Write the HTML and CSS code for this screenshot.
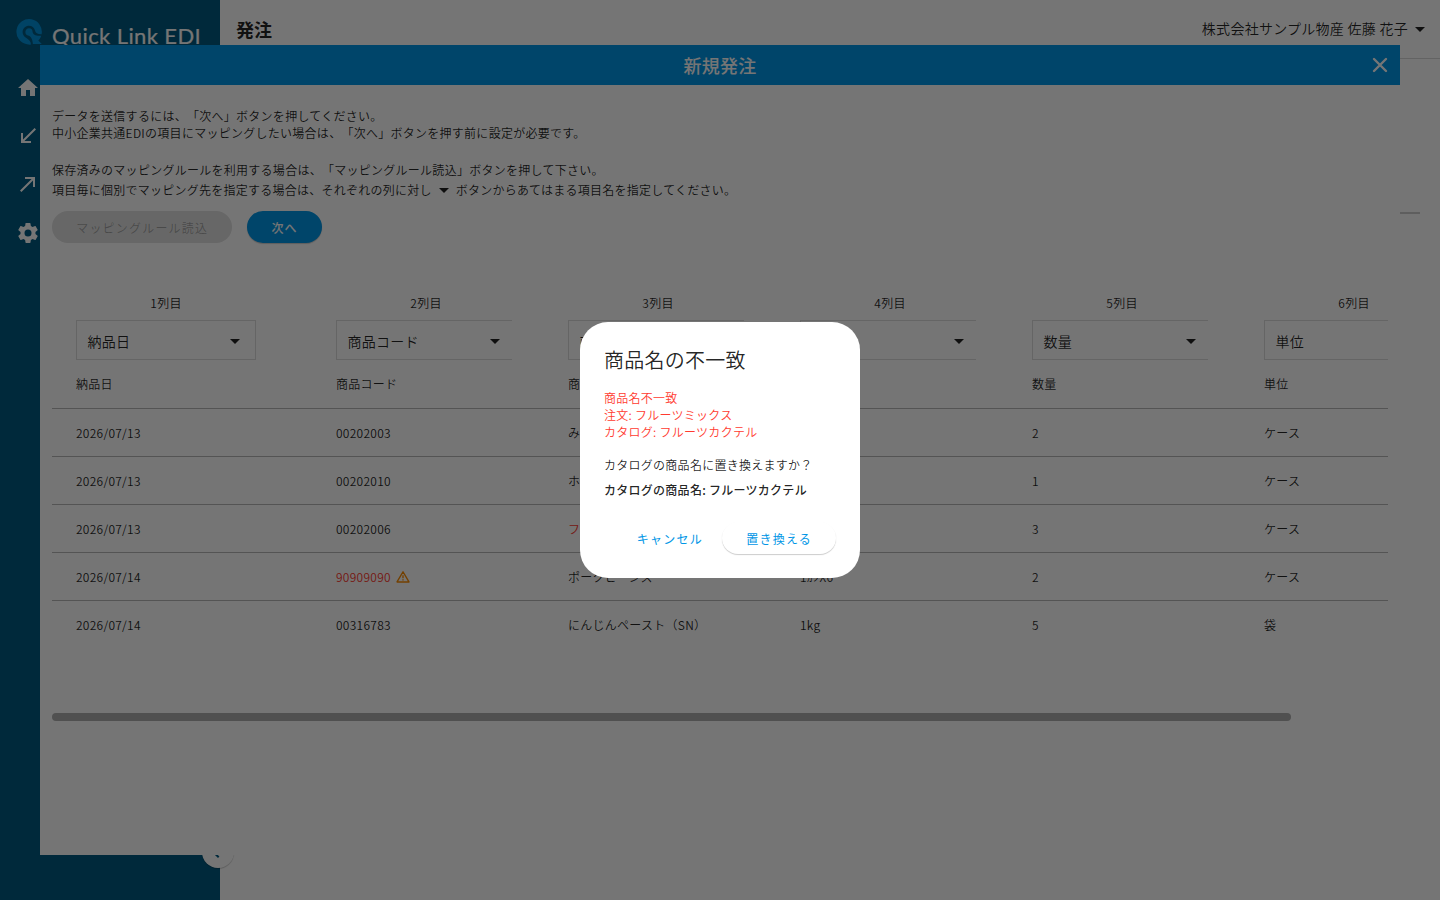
FILE: index.html
```html
<!DOCTYPE html>
<html lang="ja">
<head>
  <meta charset="UTF-8">
  <meta name="viewport" content="width=device-width, initial-scale=1.0">
  <title>Quick Link EDI</title>
  <link rel="stylesheet" href="styles.css">
</head>
<body>
  <div class="app">
    <!-- Sidebar -->
    <aside class="sidebar">
      <div class="brand">
        <svg class="brand-mark" viewBox="0 0 26 26">
          <path d="M15 25.6C14.8 22 12.8 20.2 9.6 18.4A6.3 6.3 0 1 1 19 11.5C19.6 14.2 21.5 15.3 25.6 15.2A12.7 12.7 0 1 0 11 25.3Q13 25.8 15 25.6Z"/>
          <path d="M13 9.2A3.8 3.8 0 0 1 16.6 13C17 15.6 19.5 17.2 25.2 16.8C24.6 19 23.6 20.5 22.3 21.5L25.8 25H16.9C16.6 20 14.6 17.2 12 16.6A3.8 3.8 0 0 1 13 9.2Z"/>
        </svg>
        <span class="brand-name">Quick Link EDI</span>
      </div>
      <nav class="nav">
        <svg class="nav-icon" viewBox="0 0 24 24"><path d="M10 20v-6h4v6h5v-8h3L12 3 2 12h3v8z"/></svg>
        <svg class="nav-icon" viewBox="0 0 24 24"><path d="M20 5.41L18.59 4 7 15.59V9H5v10h10v-2H8.41z"/></svg>
        <svg class="nav-icon" viewBox="0 0 24 24"><path d="M9 5v2h6.59L4 18.59 5.41 20 17 8.41V15h2V5z"/></svg>
        <svg class="nav-icon" viewBox="0 0 24 24"><path d="M12 15.5A3.5 3.5 0 0 1 8.5 12 3.5 3.5 0 0 1 12 8.5a3.5 3.5 0 0 1 3.5 3.5 3.5 3.5 0 0 1-3.5 3.5m7.43-2.53c.04-.32.07-.64.07-.97s-.03-.66-.07-1l2.11-1.63c.19-.15.24-.42.12-.64l-2-3.46c-.12-.22-.39-.31-.61-.22l-2.49 1c-.52-.39-1.06-.73-1.69-.98l-.37-2.65A.506.506 0 0 0 14 2h-4c-.25 0-.46.18-.5.42l-.37 2.65c-.63.25-1.17.59-1.69.98l-2.49-1c-.22-.09-.49 0-.61.22l-2 3.46c-.13.22-.07.49.12.64L4.57 11c-.04.34-.07.67-.07 1s.03.65.07.97l-2.11 1.66c-.19.15-.25.42-.12.64l2 3.46c.12.22.39.3.61.22l2.49-1.01c.52.4 1.06.74 1.69.99l.37 2.65c.04.24.25.42.5.42h4c.25 0 .46-.18.5-.42l.37-2.65c.63-.26 1.17-.59 1.69-.99l2.49 1.01c.22.08.49 0 .61-.22l2-3.46c.12-.22.07-.49-.12-.64z"/></svg>
      </nav>
      <button class="collapse">
        <svg viewBox="0 0 24 24"><path d="M15.41 16.58L10.83 12l4.58-4.59L14 6l-6 6 6 6z"/></svg>
      </button>
    </aside>

    <main class="main">
      <header class="topbar">
        <h1 class="page-title">発注</h1>
        <div class="user">株式会社サンプル物産 佐藤 花子
          <svg class="caret" viewBox="0 0 24 24"><path d="M7 10l5 5 5-5z"/></svg>
        </div>
      </header>
      <hr class="section-line">
    </main>
  </div>

  <!-- Order window -->
  <div class="order">
    <div class="order-head">
      <h2 class="order-title">新規発注</h2>
      <svg class="order-close" viewBox="0 0 24 24"><path d="M6 6L18 18M18 6L6 18"/></svg>
    </div>
    <div class="order-body">
      <p class="guide">データを送信するには、「次へ」ボタンを押してください。<br>中小企業共通EDIの項目にマッピングしたい場合は、「次へ」ボタンを押す前に設定が必要です。</p>
      <p class="guide">保存済みのマッピングルールを利用する場合は、「マッピングルール読込」ボタンを押して下さい。</p>
      <p class="guide guide-select">項目毎に個別でマッピング先を指定する場合は、それぞれの列に対し<svg class="caret" viewBox="0 0 24 24"><path d="M7 10l5 5 5-5z"/></svg>ボタンからあてはまる項目名を指定してください。</p>
      <div class="actions">
        <button class="btn btn-disabled" disabled>マッピングルール読込</button>
        <button class="btn btn-primary">次へ</button>
      </div>

      <div class="table-wrap">
        <table class="table">
          <thead>
            <tr class="mapping">
              <th><div class="col-no">1列目</div><div class="select-clip"><div class="select">納品日<svg class="caret" viewBox="0 0 24 24"><path d="M7 10l5 5 5-5z"/></svg></div></div></th>
              <th><div class="col-no">2列目</div><div class="select-clip"><div class="select">商品コード<svg class="caret" viewBox="0 0 24 24"><path d="M7 10l5 5 5-5z"/></svg></div></div></th>
              <th><div class="col-no">3列目</div><div class="select-clip"><div class="select">商品名<svg class="caret" viewBox="0 0 24 24"><path d="M7 10l5 5 5-5z"/></svg></div></div></th>
              <th><div class="col-no">4列目</div><div class="select-clip"><div class="select select-empty"><svg class="caret" viewBox="0 0 24 24"><path d="M7 10l5 5 5-5z"/></svg></div></div></th>
              <th><div class="col-no">5列目</div><div class="select-clip"><div class="select">数量<svg class="caret" viewBox="0 0 24 24"><path d="M7 10l5 5 5-5z"/></svg></div></div></th>
              <th><div class="col-no">6列目</div><div class="select-clip"><div class="select">単位<svg class="caret" viewBox="0 0 24 24"><path d="M7 10l5 5 5-5z"/></svg></div></div></th>
            </tr>
          </thead>
          <tbody>
            <tr><td>納品日</td><td>商品コード</td><td>商品名</td><td></td><td>数量</td><td>単位</td></tr>
            <tr><td>2026/07/13</td><td>00202003</td><td>みかん</td><td></td><td>2</td><td>ケース</td></tr>
            <tr><td>2026/07/13</td><td>00202010</td><td>ホール</td><td></td><td>1</td><td>ケース</td></tr>
            <tr><td>2026/07/13</td><td>00202006</td><td class="error">フルーツミックス</td><td></td><td>3</td><td>ケース</td></tr>
            <tr><td>2026/07/14</td><td class="error">90909090<svg class="warn" viewBox="0 0 24 24"><path d="M12 3L1.8 20.5H22.2ZM12 9v5M12 16v2.2"/></svg></td><td>ポークビーンズ</td><td>1ｶﾝX6</td><td>2</td><td>ケース</td></tr>
            <tr><td>2026/07/14</td><td>00316783</td><td>にんじんペースト（SN）</td><td>1kg</td><td>5</td><td>袋</td></tr>
          </tbody>
        </table>
        <div class="scrollbar"></div>
      </div>
    </div>
  </div>

  <!-- Confirm dialog -->
  <div class="overlay">
    <div class="dialog">
      <h3 class="dialog-title">商品名の不一致</h3>
      <p class="dialog-error">商品名不一致<br>注文: フルーツミックス<br>カタログ: フルーツカクテル</p>
      <p class="dialog-text">カタログの商品名に置き換えますか？</p>
      <p class="dialog-name">カタログの商品名: フルーツカクテル</p>
      <div class="dialog-actions">
        <button class="btn btn-text">キャンセル</button>
        <button class="btn btn-raised">置き換える</button>
      </div>
    </div>
  </div>
</body>
</html>
```
FILE: styles.css
```css
* {
  box-sizing: border-box;
}

body {
  margin: 0;
  height: 900px;
  overflow: hidden;
  font-family: "Noto Sans CJK JP", sans-serif;
  font-size: 12px;
  font-weight: 350;
  line-height: 17px;
  letter-spacing: 0.27px;
  text-spacing-trim: space-all;
  color: rgba(0, 0, 0, 0.87);
  background: #fff;
}

h1, h2, h3, p {
  margin: 0;
}

button {
  border: none;
  font-family: inherit;
}

.app {
  display: flex;
  height: 900px;
}

/* Sidebar */
.sidebar {
  position: relative;
  width: 220px;
  padding-top: 19px;
  background: #005a80;
}

.brand {
  display: flex;
  height: 57px;
  padding-left: 16px;
}

.brand-mark {
  width: 26px;
  height: 26px;
  fill: #0092dc;
}

.brand-name {
  margin-left: 10px;
  font-family: Lato, sans-serif;
  font-size: 22px;
  font-weight: 400;
  line-height: 34px;
  letter-spacing: 0.4px;
  white-space: nowrap;
  color: #fff;
  -webkit-text-stroke: 0.2px #fff;
}

.nav {
  display: flex;
  flex-direction: column;
  gap: 24.2px;
  padding-left: 16px;
}

.nav-icon {
  width: 24px;
  height: 24px;
  fill: #fff;
}

.collapse {
  position: absolute;
  right: -14px;
  top: 836px;
  width: 32px;
  height: 32px;
  padding: 4px;
  border-radius: 50%;
  background: #fff;
  box-shadow: 0 1px 1px rgba(0, 0, 0, 0.2);
}

.collapse svg {
  display: block;
  width: 24px;
  margin-left: -2px;
  fill: #005a80;
}

/* Main area */
.main {
  flex: 1;
}

.topbar {
  display: flex;
  justify-content: space-between;
  align-items: center;
  height: 59px;
  padding: 0 8px 0 16px;
  border-bottom: 1px solid #d8d8d8;
}

.page-title {
  font-size: 18px;
  font-weight: 700;
  letter-spacing: 0;
}

.user {
  display: flex;
  align-items: center;
  padding-bottom: 1px;
  font-size: 14px;
}

.caret {
  width: 24px;
  height: 24px;
  fill: rgba(0, 0, 0, 0.87);
}

.section-line {
  height: 2px;
  margin: 153px 20px 0;
  border: none;
  background: #ccc;
}

/* Order window */
.order {
  position: absolute;
  left: 40px;
  top: 45px;
  width: 1360px;
  height: 810px;
  background: #fff;
}

.order-head {
  display: flex;
  align-items: center;
  height: 40px;
  padding: 0 8px 0 32px;
  background: #0096e6;
}

.order-title {
  flex: 1;
  text-align: center;
  font-size: 18px;
  font-weight: 500;
  color: #fff;
}

.order-close {
  width: 24px;
  height: 24px;
  fill: none;
  stroke: #fff;
  stroke-width: 2.4;
  stroke-linecap: round;
}

.order-body {
  padding: 22px 12px 0;
}

.guide {
  margin-bottom: 20px;
}

.guide-select {
  display: flex;
  align-items: center;
  margin: -20px 0 10px;
  height: 23px;
  letter-spacing: 0.25px;
}

.actions {
  display: flex;
  gap: 15px;
}

.btn {
  height: 32px;
  padding: 0 24px;
  border-radius: 16px;
  font-size: 12px;
  font-weight: 400;
  letter-spacing: 1.2px;
}

.btn-disabled {
  padding: 0 24.2px;
  background: #e0e0e0;
  color: rgba(0, 0, 0, 0.3);
  font-weight: 350;
}

.btn-primary {
  background: #0096e6;
  color: #fff;
  font-weight: 500;
  box-shadow: 0 1px 1px rgba(0, 0, 0, 0.2);
}

/* Table */
.table-wrap {
  margin-top: 51px;
  overflow: hidden;
}

.table {
  width: 1420px;
  table-layout: fixed;
  border-collapse: collapse;
}

.table th {
  width: 232px;
  padding: 0 32px 0 24px;
  font-weight: 350;
  text-align: left;
}

.table th:first-child {
  width: 260px;
}

.col-no {
  width: 180px;
  line-height: 17px;
  margin-bottom: 9px;
  text-align: center;
}

.select-clip {
  overflow: hidden;
}

.select {
  display: flex;
  justify-content: space-between;
  align-items: center;
  width: 180px;
  height: 40px;
  padding: 2px 8px 0 10.5px;
  border: 1px solid #ddd;
  font-size: 14px;
}

.select-empty {
  justify-content: flex-end;
}

.table td {
  height: 48px;
  padding: 0 24px;
  border-bottom: 1px solid #b8b8b8;
  white-space: nowrap;
}

.table tr:last-child td {
  border-bottom: none;
}

.table .error {
  color: #ff3b30;
}

.warn {
  width: 14px;
  height: 14px;
  margin-left: 5px;
  vertical-align: -2px;
  fill: none;
  stroke: #fb8c00;
  stroke-width: 2.4;
  stroke-linejoin: round;
}

.scrollbar {
  width: 1239px;
  height: 8px;
  margin-top: 65px;
  border-radius: 4px;
  background: #aeaeae;
}

/* Confirm dialog */
.overlay {
  position: fixed;
  inset: 0;
  display: flex;
  justify-content: center;
  align-items: center;
  background: rgba(0, 0, 0, 0.54);
}

.dialog {
  width: 280px;
  height: 256px;
  padding: 22px 24px 0;
  border-radius: 28px;
  background: #fff;
}

.dialog-title {
  font-size: 20px;
  font-weight: 350;
  line-height: 32px;
}

.dialog-error {
  margin-top: 13px;
  color: #ff3b30;
}

.dialog-text {
  margin-top: 16px;
}

.dialog-name {
  margin-top: 8px;
  font-weight: 500;
}

.dialog-actions {
  display: flex;
  justify-content: flex-end;
  margin-top: 24px;
}

.btn-text,
.btn-raised {
  background: #fff;
  color: #0096e6;
}

.btn-text {
  padding: 0 19.5px;
}

.btn-raised {
  box-shadow: 0 1px 1px rgba(0, 0, 0, 0.2);
}
```
